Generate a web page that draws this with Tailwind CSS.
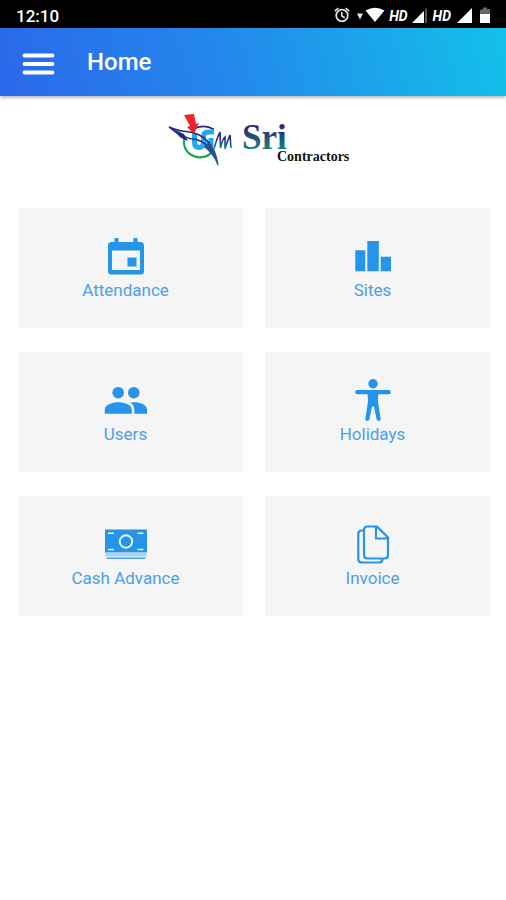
<!DOCTYPE html>
<html lang="en">
<head>
<meta charset="utf-8">
<meta name="viewport" content="width=device-width, initial-scale=1">
<title>Home</title>
<script src="https://cdn.jsdelivr.net/npm/@tailwindcss/browser@4"></script>
</head>
<body class="min-h-screen bg-white font-['Roboto',sans-serif]">
<div class="flex h-7 items-center justify-between bg-black pt-1 pr-4 pl-4 text-white">
  <span class="text-[17px] leading-6 font-medium">12:10</span>
  <div class="flex items-center">
    <svg class="h-5 w-[54px]" viewBox="334 5 54 20" fill="none" aria-label="Alarm and Wi-Fi">
      <circle cx="342" cy="14.500" r="5.800" stroke="#e4e4e4" stroke-width="1.800"/>
      <path d="M341.800 11v4l3 1.800M334.800 10.200l3.600-3M349.200 10.200l-3.600-3" stroke="#e4e4e4" stroke-width="1.600"/>
      <path d="M357 12.500h6l-3 6z" fill="#e4e4e4"/>
      <path d="M365.500 9.500Q375 4 384.500 9.500L375 21z" fill="#fff"/>
    </svg>
    <span class="ml-px text-sm leading-5 font-bold italic">HD</span>
    <svg class="ml-1 h-5 w-[15px]" viewBox="0 0 15 20" aria-label="Signal 1"><path d="M13 3.500L15 2v15h-2z" fill="#555"/><path d="M0 17L12 5v12z" fill="#fff"/></svg>
    <span class="ml-1.5 text-sm leading-5 font-bold italic">HD</span>
    <svg class="ml-1.5 h-5 w-[15px]" viewBox="0 0 15 20" aria-label="Signal 2"><path d="M0 17L15 2v15z" fill="#fff"/></svg>
    <svg class="ml-2 h-5 w-2.5" viewBox="0 0 10 20" aria-label="Battery"><path d="M3 1.500h4V3h3v5H0V4l3-1z" fill="#666"/><path d="M0 8h10v9H0z" fill="#fff"/></svg>
  </div>
</div>
<header class="flex h-[68px] items-center bg-linear-[75deg,#2b68ea,#2388ec_45%,#13c1e9] pl-[22px] text-white shadow-[0_1px_4px_rgba(0,0,0,0.4)]">
  <button type="button" aria-label="Open menu" class="mt-1 block">
    <svg class="h-6 w-[33px]" viewBox="0 0 33 24" stroke="#fff" stroke-width="3.800" stroke-linecap="round"><path d="M2.500 3.500h28M2.500 12h28M2.500 20.500h28"/></svg>
  </button>
  <h1 class="ml-8 text-2xl font-medium">Home</h1>
</header>
<main class="pt-3.5 pr-4 pl-[18px]">
  <svg class="mx-auto block h-[60px] w-[190px]" viewBox="159 110 190 60" role="img" aria-label="Sri Contractors">
    <defs>
      <linearGradient id="word" x1="0" y1="0" x2="0" y2="1"><stop offset=".25" stop-color="#29287f"/><stop offset=".75" stop-color="#168078"/></linearGradient>
      <linearGradient id="tail" x1="0" y1="0" x2="0" y2="1"><stop offset=".4" stop-color="#24248c"/><stop offset="1" stop-color="#18916d"/></linearGradient>
    </defs>
    <path d="M185 137A16 15 0 0 0 213 151" fill="none" stroke="#18a84b" stroke-width="2.200"/>
    <path d="M192 130Q203 123 214 129.500" fill="none" stroke="#24248c" stroke-width="1.600"/>
    <path d="M194.500 133v9.500q0 5 4.500 5t4.500-5v-6q0-4.500 5-4.500h5.500M204.500 144h6.500v-6" fill="none" stroke="#22aaf0" stroke-width="5"/>
    <path d="M169 127Q178 131 186 131.500Q213 134 218 165Q211 143 196 139.500Q183 139 169 127z" fill="none" stroke="url(#tail)" stroke-width="1.500"/>
    <path d="M174 129.500Q178 138 188 141L184 134z" fill="#25258b"/>
    <path d="M209 142Q216 149 218 165Q212 153 204 147z" fill="#28518f"/>
    <path d="M184 115l10-1 2 10 3-1-5 11-7-7 3-1z" fill="#f2202b"/>
    <path d="M214 149q3-11 6-17l.5 16q2-9 4.500-11v12q2-7 5-14l1 13" fill="none" stroke="url(#tail)" stroke-width="1.600"/>
    <text x="242" y="149" font-family="Liberation Serif, serif" font-weight="700" font-size="35" fill="url(#word)">Sri</text>
    <text x="277" y="161" font-family="Liberation Serif, serif" font-weight="700" font-size="14" fill="#111">Contractors</text>
  </svg>
  <nav aria-label="Main sections" class="mt-[38px] grid grid-cols-2 gap-x-[22px] gap-y-6 text-[17px] leading-5 text-[#4c9fea]">
    <a href="#attendance" class="flex h-[120px] flex-col items-center bg-[#f5f5f5] pt-6 pr-2.5">
      <svg class="size-12" viewBox="0 0 48 48" fill="#2694e8" aria-hidden="true"><path fill-rule="evenodd" d="M12.500 6h4v4h15V6h4v4h3q3.500 0 3.500 3.500v25.500q0 3.500-3.500 3.500h-29q-3.500 0-3.500-3.500V13.500Q6 10 9.500 10h3zM10 18.500v19.500h28V18.500z"/><path d="M25.500 25.500h9v9h-9z"/></svg>
      <span>Attendance</span>
    </a>
    <a href="#sites" class="flex h-[120px] flex-col items-center bg-[#f5f5f5] pt-6 pr-2.5">
      <svg class="size-12" viewBox="0 0 48 48" fill="#2694e8" aria-hidden="true"><path d="M6.300 18.300h10v21h-10zM18.300 9h11.500v30.300H18.300zM31.700 24.700H42v14.600H31.700z"/></svg>
      <span>Sites</span>
    </a>
    <a href="#users" class="flex h-[120px] flex-col items-center bg-[#f5f5f5] pt-6 pr-2.5">
      <svg class="size-12" viewBox="0 0 48 48" fill="#2694e8" aria-hidden="true"><circle cx="16.200" cy="16.700" r="5.800"/><circle cx="31.800" cy="16.700" r="5.800"/><path d="M2.800 37.800v-4.300c0-4.800 8-7.200 13.500-7.200s13.500 2.400 13.500 7.200v4.300zM32.300 37.800v-4.300c0-3-1.500-5.200-3.800-7q1.500-.2 3.300-.2c6 0 13.200 2.400 13.200 7.200v4.300z"/></svg>
      <span>Users</span>
    </a>
    <a href="#holidays" class="flex h-[120px] flex-col items-center bg-[#f5f5f5] pt-6 pr-2.5">
      <svg class="size-12" viewBox="0 0 48 48" fill="#2694e8" aria-hidden="true"><circle cx="24" cy="7.700" r="4.700"/><path d="M8.300 14h31.400a2.100 2.100 0 0 1 0 4.300H29.500q-1 4.700-.3 9L31.700 43q.2 2-1.800 2t-2.300-1.800L25 30.500h-2l-2.600 12.700Q20 45 18.100 45t-1.800-2l2.500-15.700q.7-4.300-.3-9H8.300a2.100 2.100 0 0 1 0-4.300z"/></svg>
      <span>Holidays</span>
    </a>
    <a href="#cash-advance" class="flex h-[120px] flex-col items-center bg-[#f5f5f5] pt-6 pr-2.5">
      <svg class="size-12" viewBox="0 0 48 48" aria-hidden="true"><path d="M3 9.500h42v23H3z" fill="#2694e8"/><path d="M3.500 32.500h41v4h-41z" fill="#aed3f4"/><path d="M4.500 38.300h39" stroke="#46a3eb" stroke-width="1.600"/><circle cx="24" cy="21.500" r="6.200" fill="none" stroke="#e9f4fd" stroke-width="2"/><path d="M6 13.300h6M35.500 13.300h6M6 29.500h6M35.500 29.500h6" stroke="#e9f4fd" stroke-width="1.600"/></svg>
      <span>Cash Advance</span>
    </a>
    <a href="#invoice" class="flex h-[120px] flex-col items-center bg-[#f5f5f5] pt-6 pr-2.5">
      <svg class="size-12" viewBox="0 0 48 48" fill="none" stroke="#2694e8" stroke-width="2.200" stroke-linejoin="round" aria-hidden="true"><path d="M14.500 10.500h-1.700q-3.500 0-3.500 3.500v25q0 3.500 3.500 3.500H30q3.500 0 3.500-3.500"/><path d="M18.500 6.500H28L39 17.500V35q0 3.500-3.500 3.500h-17Q15 38.500 15 35V10q0-3.500 3.500-3.500zM27 7v11.500h11.500"/></svg>
      <span>Invoice</span>
    </a>
  </nav>
</main>
</body>
</html>
